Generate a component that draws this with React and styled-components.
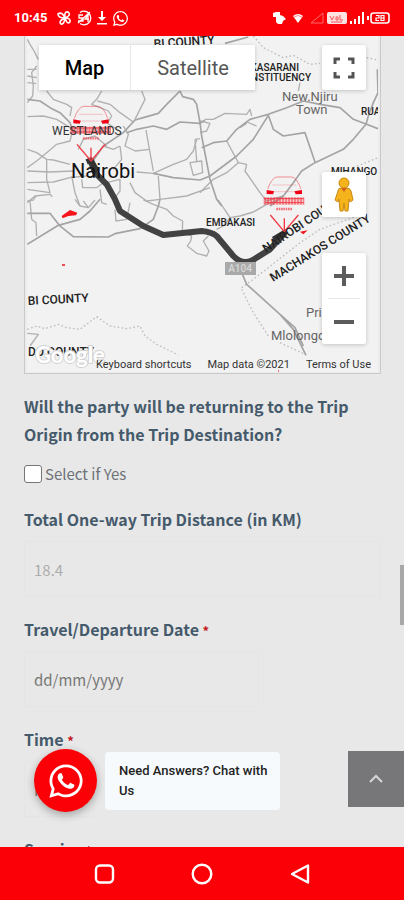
import React, { useState } from 'react';
import styled, { createGlobalStyle } from 'styled-components';
import { FaWhatsapp } from 'react-icons/fa';

const GlobalStyle = createGlobalStyle`
  * {
    box-sizing: border-box;
  }

  body {
    margin: 0;
    background: #e8e8e8;
    font-family: 'Noto Sans CJK SC', 'Open Sans', sans-serif;
  }

  button {
    padding: 0;
    border: 0;
    cursor: pointer;
  }
`;

const Screen = styled.div`
  display: flex;
  flex-direction: column;
  position: relative;
  height: 100vh;
`;

const StatusBar = styled.header`
  display: flex;
  flex: none;
  align-items: center;
  justify-content: space-between;
  padding: 0 13px 0 14px;
  height: 36px;

  background: #fb0007;
  color: #fff;
  font: 700 13px/20px Roboto, sans-serif;
`;

const StatusGroup = styled.div`
  display: flex;
  align-items: center;
  gap: ${props => props.$gap}px;
`;

const Page = styled.main`
  flex: 1;
  padding: 0 23px 0 24px;
  min-height: 0;
  overflow: hidden;
`;

const MapFrame = styled.section`
  position: relative;
  margin: 0 0 18px;
  padding: 0 2px 1px;

  border: 1px solid #c9c9c9;
  border-top: 0;

  background: #ececec;
`;

const MapCanvas = styled.svg`
  display: block;
  width: 100%;
  height: 336px;

  background: #f2f2f2;
  font-family: Roboto, sans-serif;
`;

const MapTypes = styled.div`
  display: flex;
  position: absolute;
  top: 9px;
  left: 14px;

  box-shadow: 0 1px 4px rgba(0, 0, 0, 0.2);
`;

const MapTypeButton = styled.button`
  width: ${props => props.$wide ? 125 : 91}px;
  height: 45px;

  background: #fff;
  color: ${props => props.$active ? '#000' : '#565656'};
  font: ${props => props.$active ? 500 : 400} 20px/28px Roboto, sans-serif;

  & + & {
    border-left: 1px solid #e6e6e6;
  }
`;

const MapTools = styled.div`
  display: flex;
  flex-direction: column;
  position: absolute;
  top: 9px;
  right: 14px;
`;

const ToolButton = styled.button`
  display: flex;
  align-items: center;
  justify-content: center;
  width: 44px;
  height: 45px;

  background: #fff;
  border-radius: 2px;
  box-shadow: 0 1px 4px rgba(0, 0, 0, 0.2);
`;

const PegmanButton = styled(ToolButton)`
  margin: 82px 0 36px;
`;

const ZoomBox = styled.div`
  width: 44px;

  background: #fff;
  border-radius: 2px;
  box-shadow: 0 1px 4px rgba(0, 0, 0, 0.2);

  hr {
    margin: 0 6px;
    border: 0;
    border-top: 1px solid #e6e6e6;
  }
`;

const ZoomButton = styled(ToolButton)`
  background: none;
  box-shadow: none;
`;

const MapFooter = styled.div`
  display: flex;
  align-items: center;
  justify-content: flex-end;
  gap: 16px;
  position: absolute;
  right: 9px;
  bottom: 0;

  color: #333;
  font: 400 11px/16px Roboto, sans-serif;

  a, button {
    background: none;
    color: inherit;
    font: inherit;
    text-decoration: none;
  }
`;

const Field = styled.div`
  display: flex;
  flex-direction: column;
  align-items: flex-start;
  margin: 0 0 18px;
`;

const Label = styled.label`
  margin: 0 0 8px;

  color: #455a6b;
  font-size: 16px;
  font-weight: 700;
  line-height: 28px;
`;

const Question = styled.fieldset`
  margin: 0 0 17px;
  padding: 0;
  border: 0;

  legend {
    margin: 0 0 12px;
    padding: 0;

    color: #455a6b;
    font-size: 16px;
    font-weight: 700;
    line-height: 28px;
  }
`;

const Required = styled.span`
  color: #c4161c;
  font-size: 13px;
  line-height: 1;
`;

const CheckLabel = styled.label`
  display: flex;
  align-items: center;
  gap: 3px;

  color: #6c7278;
  font-size: 15px;
  line-height: 28px;
`;

const Checkbox = styled.input`
  margin: 0;
  width: 18px;
  height: 18px;

  appearance: none;
  background: #fff;
  border: 1px solid #767676;
  border-radius: 3px;

  &:checked {
    background: #455a6b;
  }
`;

const TextInput = styled.input`
  padding: 0 9px;
  width: ${props => props.$width || '100%'};
  height: 56px;

  background: transparent;
  border: 1px solid #e4e6e6;
  color: #777;
  font: 400 15px/28px 'Noto Sans CJK SC', 'Open Sans', sans-serif;

  &:disabled {
    color: #adadad;
  }

  &::placeholder {
    color: #777;
    opacity: 1;
  }
`;

const ChatWidget = styled.div`
  display: flex;
  align-items: center;
  gap: 8px;
  position: absolute;
  bottom: 88px;
  left: 34px;
`;

const ChatButton = styled.button`
  display: flex;
  align-items: center;
  justify-content: center;
  width: 63px;
  height: 63px;

  background: #fb0007;
  border-radius: 50%;
  box-shadow: 0 3px 8px rgba(0, 0, 0, 0.3);
  color: #fff;
`;

const ChatBubble = styled.p`
  margin: 0;
  padding: 9px 12px 9px 14px;
  width: 175px;

  background: #f7fafc;
  border-radius: 4px;
  color: #222;
  font: 500 13px/20px Roboto, sans-serif;
`;

const TopButton = styled.button`
  display: flex;
  align-items: center;
  justify-content: center;
  position: absolute;
  right: 0;
  bottom: 93px;
  width: 56px;
  height: 56px;

  background: #777779;
`;

const ScrollThumb = styled.div`
  position: absolute;
  top: 565px;
  right: 0;
  width: 4px;
  height: 60px;

  background: #a8a8a8;
`;

const NavBar = styled.nav`
  display: flex;
  flex: none;
  align-items: center;
  justify-content: center;
  gap: 58px;
  height: 53px;

  background: #fb0007;

  button {
    display: flex;
    align-items: center;
    justify-content: center;
    width: 40px;
    height: 40px;

    background: none;
  }
`;

const MINOR_ROADS = [
  'M22 10 30 25 42 45 55 70',
  'M22 100H50M22 120 50 125M22 140 48 142M50 90 35 110 40 150 38 180 22 200',
  'M80 165 100 190 140 205 155 215 150 240',
  'M22 242 70 240 110 250 150 275 165 290',
  'M245 165 230 190 215 205 240 215 265 225 275 240 262 262 300 285',
  'M232 195 270 205 300 230 340 258',
  'M365 165 375 190 360 220 345 250',
  'M310 270 325 295 315 330 345 345 390 340',
  'M378 282 390 350 400 405',
  'M350 408 400 412 460 385 500 370 520 345 530 310',
  'M510 380 545 375 548 410 520 418ZM525 310 530 375M525 310 540 308',
  'M415 420 420 490',
  'M22 340 50 350 80 370 100 372 150 385',
  'M22 395 50 375 80 350 110 325 150 315 155 295',
  'M22 405 90 408 160 405',
  'M80 370 80 430 90 470 22 460',
  'M22 440 100 438 150 425 200 420',
  'M22 500 45 480 90 475 97 482',
  'M155 420 165 470 180 510',
  'M185 430 188 455 230 455 250 440',
  'M300 330 305 370 280 400M250 330 280 340 300 330M175 340 190 310 225 300 260 330',
  'M260 440 300 430 300 465 285 485M330 440 345 470 380 495 420 490 500 480 570 455',
  'M555 250 580 250 615 232 680 235 690 220 695 240',
  'M540 255 570 262 560 285 540 290',
  'M660 275 680 258 710 270M660 275 680 262M840 140 835 165',
  'M620 315 655 380 680 385 675 405 720 470 740 495 790 480',
  'M655 380 620 410 580 430 540 470',
  'M30 495 35 550 48 560 50 600M22 495 40 492 48 480',
  'M165 490 180 510 205 515 225 492M205 515 190 495M240 460 245 500 260 505',
  'M370 492 400 505 440 520 460 540 488 555 487 590 515 600 512 615 502 630 530 652 560 660 567 645 550 615 565 600',
  'M285 520 288 555 320 550 330 500',
  'M595 492 620 530 630 545 660 540 700 528 740 505 770 492',
  'M630 545 610 570 590 580',
  'M22 892 55 895 30 930',
];

const MAJOR_ROADS = [
  'M22 190 60 195 90 215 120 230 150 260 160 290',
  'M480 165 440 205 415 232 370 245 345 252 310 290 250 330 215 380',
  'M480 165 488 182 520 190 530 205 540 260 545 300 570 430 590 490 605 510',
  'M320 290 350 280 400 270 440 280 480 258 540 262 555 252',
  'M400 412 460 425 540 432 570 420 650 360 700 310 745 238',
  'M545 335 580 320 620 315 650 280 690 250 745 235 800 215 850 195 900 205 960 215 1000 250 1040 265 1074 278',
  'M745 238 760 280 790 300 855 290 885 378',
  'M1072 100 1074 170 1060 200 1045 240 1038 265 1000 310 970 340 885 380 845 405 820 440 790 480 750 510',
  'M615 22 685 3',
  'M22 532 90 532 118 568 160 602 265 603 285 593 360 578 400 550 415 510 420 490',
  'M22 625 115 568 180 550 210 525 240 490',
  'M665 710 680 745 780 835 820 880 858 958M780 835 825 875 850 930',
];

const BORDERS = [
  'M700 0 730 35 790 65 820 58 870 85 900 82',
  'M1040 65 1074 72M1000 395 1074 365',
  'M22 880 50 870 75 878 115 865 140 875 180 880 230 842 270 870 320 878 360 870 375 900 410 925 475 957',
  'M665 760 700 830 745 900M780 920 855 955',
  'M665 755 700 730 745 695 840 620 900 580 1040 530',
];

const ROUTE = 'M213 378 225 410 260 445 285 490 300 525 370 570 430 597 545 585Q575 588 590 600L640 660Q672 694 710 665L750 640 795 590';

function CarPin({ x, y }) {
  return (
    <g transform={`translate(${x} ${y})`} stroke="#f33a45" fill="none" strokeWidth="4">
      <path d="M-50-128Q-38-162-22-164H22Q38-162 50-128" strokeWidth="3" opacity=".55" />
      <path d="M-36-140H36M-28-120H28" strokeWidth="2" opacity=".4" />
      <path d="M-53-125-30-121-34-112-53-113ZM53-125 30-121 34-112 53-113Z" fill="#f00012" stroke="none" />
      <path d="M-62-92H60" strokeWidth="22" strokeDasharray="7 2" opacity=".6" />
      <path d="M-60-99H58M-58-87H58" strokeWidth="3" />
      <path d="M-24-68H24" strokeWidth="7" strokeDasharray="5 2" opacity=".7" />
      <path d="M-42-50 0 0 42-50M0-40V-6" />
    </g>
  );
}

function TripMap() {
  return (
    <MapCanvas viewBox="0 0 351 336" preserveAspectRatio="xMidYMid slice" role="img" aria-label="Trip route">
      <g transform="translate(-7 0) scale(.33333)" fill="none" strokeLinejoin="round">
        {BORDERS.map(d => <path key={d} d={d} stroke="#bdbdbd" strokeWidth="4" strokeDasharray="5 7" />)}
        {MINOR_ROADS.map(d => <path key={d} d={d} stroke="#b0b0b0" strokeWidth="4" />)}
        {MAJOR_ROADS.map(d => <path key={d} d={d} stroke="#a4a4a4" strokeWidth="5" />)}
        <path d="M125 540 150 522 172 530 168 538 145 540 128 547ZM126 685H135V689H126ZM840 587 863 583 850 595ZM774 998 778 1008 776 1012Z" fill="#f5141c" />
        <path d={ROUTE} stroke="#424242" strokeWidth="18" />
        <path d="M200 378 213 372 228 400 220 410M760 610 800 586" stroke="#333" strokeWidth="16" />
        <CarPin x={213} y={375} />
        <CarPin x={793} y={587} />
      </g>

      <rect x="198" y="226" width="31" height="13" fill="#a9a9a9" />
      <g fill="#222" fontSize="10" fontWeight="500">
        <text x="213" y="236" textAnchor="middle" fill="#d8d8d8">A104</text>
        <text x="127" y="12" transform="rotate(-4 127 12)" fontSize="12">BI COUNTY</text>
        <text x="25" y="99" fontSize="12" fontWeight="400" fill="#333">WESTLANDS</text>
        <text x="272" y="35" textAnchor="end">KASARANI</text>
        <text x="284" y="45" textAnchor="end">CONSTITUENCY</text>
        <text x="334" y="79">RUAI</text>
        <text x="304" y="139">MIHANGO</text>
        <text x="179" y="190">EMBAKASI</text>
        <text x="1" y="269" transform="rotate(-3 1 269)" fontSize="12">BI COUNTY</text>
        <text x="1" y="320" fontSize="12">DO COUNTY</text>
        <text x="239" y="217" transform="rotate(-34 239 217)" fontSize="12">NAIROBI COUNTY</text>
        <text x="246" y="246" transform="rotate(-32 246 246)" fontSize="12">MACHAKOS COUNTY</text>
      </g>
      <g fill="#666" fontSize="13">
        <text x="255" y="65">New.Njiru</text>
        <text x="269" y="78">Town</text>
        <text x="279" y="281">Princess</text>
        <text x="244" y="304">Mlolongo</text>
      </g>
      <text x="44" y="142" fontSize="20" fill="#111">Nairobi</text>
      <text x="8" y="327" fontSize="22" fontFamily="Lato, sans-serif" fontWeight="700" fill="#fff" stroke="#d2d2d2" strokeWidth="2" paintOrder="stroke">Google</text>
    </MapCanvas>
  );
}

function Pegman() {
  return (
    <svg width="22" height="36" viewBox="0 0 22 36">
      <path d="M5 14Q5 11 8 11H14Q17 11 18 14L20 23 17 25 16 22 15 34H12L11 26 10 34H7L6 22 5 25 2 23Z" fill="#f5b31c" stroke="#c98a15" />
      <circle cx="11" cy="6" r="5" fill="#f5b31c" stroke="#c98a15" />
      <path d="M8 11 11 15 14 11Z" fill="#d8611c" />
    </svg>
  );
}

function StatusIcons() {
  return (
    <StatusGroup $gap={4}>
      <svg width="16" height="16" viewBox="0 0 16 16" fill="none" stroke="#fff" strokeWidth="1.6">
        <path d="M9 8Q2 8 2 4 6 1 9 8ZM9 8Q8 1 12 2 16 5 9 8ZM9 8Q15 8 14 12 11 15 9 8ZM9 8Q8 15 5 14 2 11 9 8Z" />
      </svg>
      <svg width="16" height="16" viewBox="0 0 16 16" fill="none" stroke="#fff" strokeWidth="1.3">
        <path d="M4 2.500A6.800 6.800 0 1 1 4 13.500" />
        <path d="M7 5H3V8H7V11H2M13 4 9 9H13M12 6V12M2 13 14 2" />
      </svg>
      <svg width="12" height="16" viewBox="0 0 12 16" fill="#fff">
        <path d="M5 1H7V7H10L6 11 2 7H5ZM1 13H11V14.500H1Z" />
      </svg>
      <FaWhatsapp size={17} />
    </StatusGroup>
  );
}

function SignalIcons() {
  return (
    <StatusGroup $gap={3}>
      <svg width="14" height="14" viewBox="0 0 14 14" fill="#fff">
        <path d="M1 2 4 1H8V4L11 5 14 8 11 10 10 13H6L4 11V6H1Z" />
      </svg>
      <svg width="18" height="14" viewBox="0 0 18 14">
        <path d="M4 5Q9 1 14 5L9 12Z" fill="#fff" />
        <path d="M5 6Q9 3 13 6" stroke="#f88" fill="none" />
      </svg>
      <svg width="14" height="14" viewBox="0 0 14 14" fill="none" stroke="#ff6a6a">
        <path d="M1 12H13V2Z" />
      </svg>
      <svg width="20" height="14" viewBox="0 0 20 14">
        <rect y="1" width="20" height="12" rx="2" fill="#ffe3e3" />
        <path d="M3 5 5 9 7 5M9 6H11V9H9ZM13 4V9H16M4 11H15" stroke="#fb5055" fill="none" />
      </svg>
      <svg width="14" height="14" viewBox="0 0 14 14" fill="#fff">
        <path d="M0 10H2V13H0ZM4 8H6V13H4ZM8 5H10V13H8ZM12 1H14V13H12Z" />
      </svg>
      <svg width="24" height="14" viewBox="0 0 24 14" fill="none" stroke="#fff" strokeWidth="1.6">
        <path d="M1 5V9" strokeWidth="2" />
        <rect x="4" y="2" width="18" height="10" rx="2.500" />
        <path d="M9 4.500H12V7H9V9.500H12M14 4.500H17V9.500H14ZM14 7H17" strokeWidth="1.200" />
      </svg>
    </StatusGroup>
  );
}

export default function App() {
  const [mapType, setMapType] = useState('map');

  return (
    <Screen>
      <GlobalStyle />
      <StatusBar>
        <StatusGroup $gap={8}>
          <span>10:45</span>
          <StatusIcons />
        </StatusGroup>
        <SignalIcons />
      </StatusBar>

      <Page>
        <MapFrame>
          <TripMap />
          <MapTypes>
            <MapTypeButton $active={mapType === 'map'} onClick={() => setMapType('map')}>Map</MapTypeButton>
            <MapTypeButton $wide $active={mapType === 'satellite'} onClick={() => setMapType('satellite')}>Satellite</MapTypeButton>
          </MapTypes>
          <MapTools>
            <ToolButton aria-label="Toggle fullscreen view">
              <svg width="22" height="22" viewBox="0 0 22 22" fill="none" stroke="#555" strokeWidth="3">
                <path d="M2 7V2H7M15 2H20V7M20 15V20H15M7 20H2V15" />
              </svg>
            </ToolButton>
            <PegmanButton aria-label="Street View">
              <Pegman />
            </PegmanButton>
            <ZoomBox>
              <ZoomButton aria-label="Zoom in">
                <svg width="20" height="20" viewBox="0 0 20 20" stroke="#5c5c5c" strokeWidth="4">
                  <path d="M10 0V20M0 10H20" />
                </svg>
              </ZoomButton>
              <hr />
              <ZoomButton aria-label="Zoom out">
                <svg width="20" height="20" viewBox="0 0 20 20" stroke="#5c5c5c" strokeWidth="4">
                  <path d="M0 10H20" />
                </svg>
              </ZoomButton>
            </ZoomBox>
          </MapTools>
          <MapFooter>
            <button>Keyboard shortcuts</button>
            <span>Map data ©2021</span>
            <a href="#terms">Terms of Use</a>
          </MapFooter>
        </MapFrame>

        <Question>
          <legend>Will the party will be returning to the Trip Origin from the Trip Destination?</legend>
          <CheckLabel>
            <Checkbox type="checkbox" />
            Select if Yes
          </CheckLabel>
        </Question>

        <Field>
          <Label htmlFor="distance">Total One-way Trip Distance (in KM)</Label>
          <TextInput id="distance" defaultValue="18.4" disabled />
        </Field>
        <Field>
          <Label htmlFor="date">Travel/Departure Date <Required>*</Required></Label>
          <TextInput id="date" placeholder="dd/mm/yyyy" $width="235px" />
        </Field>
        <Field>
          <Label htmlFor="time">Time <Required>*</Required></Label>
          <TextInput id="time" placeholder="HH" $width="70px" />
        </Field>
        <Field>
          <Label htmlFor="service">Service <Required>*</Required></Label>
          <TextInput id="service" />
        </Field>
      </Page>

      <ScrollThumb />
      <ChatWidget>
        <ChatButton aria-label="Chat on WhatsApp">
          <FaWhatsapp size={38} />
        </ChatButton>
        <ChatBubble>Need Answers? Chat with Us</ChatBubble>
      </ChatWidget>
      <TopButton aria-label="Back to top">
        <svg width="16" height="10" viewBox="0 0 16 10" fill="none" stroke="#d5d5d5" strokeWidth="2">
          <path d="M2 8 8 2 14 8" />
        </svg>
      </TopButton>

      <NavBar>
        <button aria-label="Recent apps">
          <svg width="22" height="22" viewBox="0 0 22 22" fill="none" stroke="#fff" strokeWidth="2.400">
            <rect x="3" y="2.500" width="17" height="17" rx="4" />
          </svg>
        </button>
        <button aria-label="Home">
          <svg width="22" height="22" viewBox="0 0 22 22" fill="none" stroke="#fff" strokeWidth="2.400">
            <circle cx="11" cy="11" r="9.300" />
          </svg>
        </button>
        <button aria-label="Back">
          <svg width="22" height="22" viewBox="0 0 22 22" fill="none" stroke="#fff" strokeWidth="2.400" strokeLinejoin="round">
            <path d="M3 11 19 2.500V19.500Z" />
          </svg>
        </button>
      </NavBar>
    </Screen>
  );
}
